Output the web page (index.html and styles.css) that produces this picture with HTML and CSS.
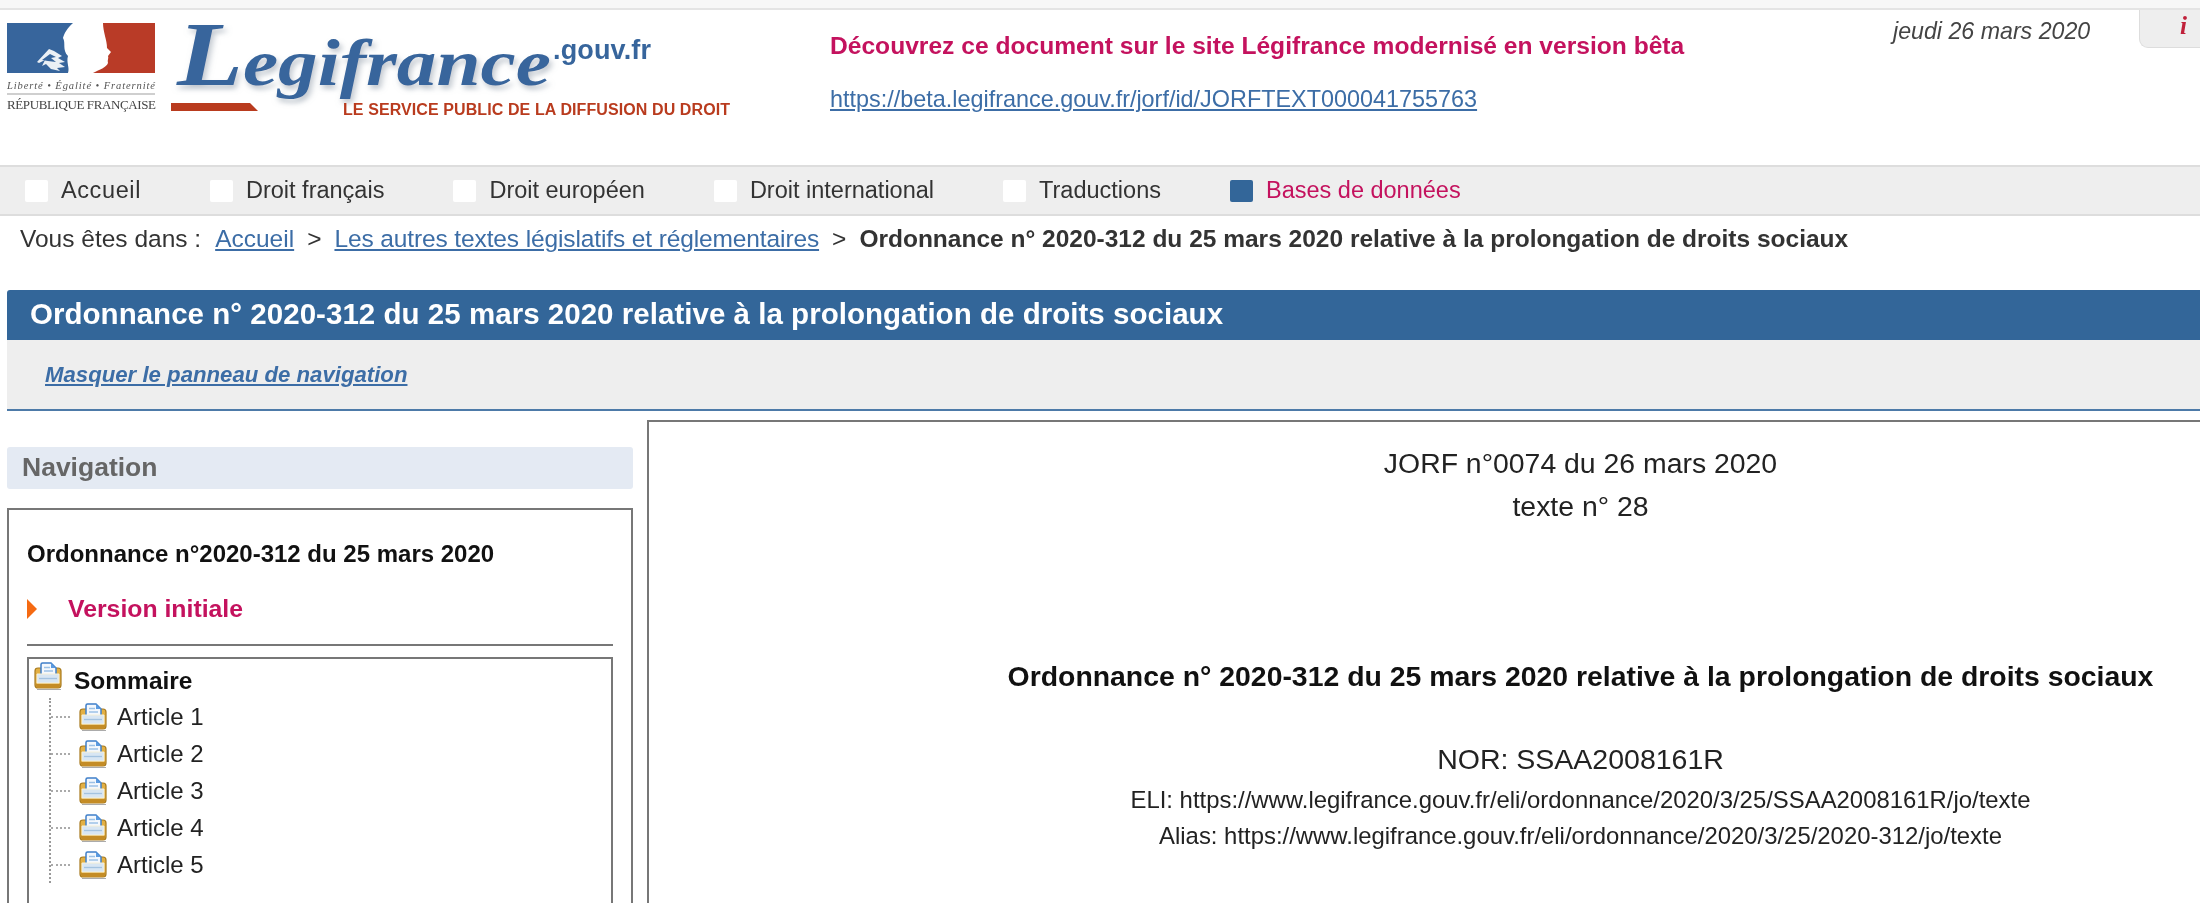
FILE: index.html
```html
<!DOCTYPE html>
<html lang="fr">
<head>
<meta charset="utf-8">
<title>Légifrance</title>
<link rel="stylesheet" href="styles.css">
</head>
<body>
<svg class="defs" width="0" height="0" aria-hidden="true">
  <defs>
    <filter id="ls" x="-5%" y="-5%" width="115%" height="125%"><feDropShadow dx="2" dy="4" stdDeviation="2.500" flood-color="#8d99a6" flood-opacity=".55"/></filter>
    <symbol id="folder" viewBox="1 0 28 28">
      <path d="M2 9q0-3 3-3h20q3 0 3 3v14q0 3-3 3H5q-3 0-3-3z" fill="#e3b044" stroke="#a87a1e" stroke-width="1.200"/>
      <path d="M8 13V2.500q0-1.500 1.500-1.500H18l5 5v7z" fill="#f4f8fd" stroke="#3f7fc9" stroke-width="1.500"/>
      <path d="M11 5.500h6M11 9h9" stroke="#9cc1e6" stroke-width="1.300"/>
      <path d="M18 1v5h5z" fill="#5c9be0"/>
      <path d="M4 12h22v9H4z" fill="#d8e6f3" stroke="#f6f0d8" stroke-width="1"/>
      <path d="M6 16.500h18" stroke="#a4c3e0" stroke-width="1.300"/>
      <path d="M3 22h24v1.500q0 2.500-2.500 2.500h-19Q3 26 3 23.500z" fill="#c48c26"/>
      <path d="M4 27.500h24" stroke="#888" stroke-width="1" opacity=".7"/>
    </symbol>
  </defs>
</svg>
<div class="page">
  <div class="topstrip"></div>
  <header class="header">
    <svg class="logo" width="740" height="110" viewBox="0 0 740 110" role="img" aria-label="Legifrance">
      <path d="M7 13H73C67 18 64 24 63 28C66 33 62 40 68 46C66 52 70 58 68 63H7z" fill="#37659c"/>
      <path d="M37 52l12-13 5 2 8 5-4 2 7 4-6 1 6 4-8 1 3 3-9-2-5-5-4 2 3-6-6 3z" fill="#fff" opacity=".9"/>
      <path d="M42 50l8-6 6 3-5 1 5 4-8-1z" fill="#37659c"/>
      <path d="M103 13H155V63H93C100 59 106 58 108 53C107 50 109 48 108 46L111 42 107 38C107 30 103 22 103 13z" fill="#b93b27"/>
      <rect x="7" y="83" width="148" height="2" fill="#cfcfcf"/>
      <text class="logo-motto" x="7" y="79" textLength="148">Liberté • Égalité • Fraternité</text>
      <text class="logo-rep" x="7" y="99" textLength="149">RÉPUBLIQUE FRANÇAISE</text>
      <text class="logo-name" transform="translate(177 75) scale(1.2 1)" filter="url(#ls)"><tspan class="logo-cap">L</tspan>egifrance</text>
      <text class="logo-gouv" x="553" y="49" textLength="98">.gouv.fr</text>
      <path d="M171 93H250L258 101H171z" fill="#b93b1e"/>
      <text class="logo-tag" x="343" y="105" textLength="387">LE SERVICE PUBLIC DE LA DIFFUSION DU DROIT</text>
    </svg>
    <div class="notice">
      <p class="notice-title">Découvrez ce document sur le site Légifrance modernisé en version bêta</p>
      <a class="notice-link" href="#">https://beta.legifrance.gouv.fr/jorf/id/JORFTEXT000041755763</a>
    </div>
    <div class="date">jeudi 26 mars 2020</div>
    <div class="infotab">i</div>
  </header>
  <nav class="mainnav">
    <a class="navitem"><span class="sq"></span>Accueil</a>
    <a class="navitem"><span class="sq"></span>Droit français</a>
    <a class="navitem"><span class="sq"></span>Droit européen</a>
    <a class="navitem"><span class="sq"></span>Droit international</a>
    <a class="navitem"><span class="sq"></span>Traductions</a>
    <a class="navitem active"><span class="sq"></span>Bases de données</a>
  </nav>
  <div class="crumbs">
    <span class="crumb-lead">Vous êtes dans :</span>
    <a href="#">Accueil</a>
    <span>&gt;</span>
    <a class="crumb-long" href="#">Les autres textes législatifs et réglementaires</a>
    <span>&gt;</span>
    <strong>Ordonnance n° 2020-312 du 25 mars 2020 relative à la prolongation de droits sociaux</strong>
  </div>
  <h1 class="titlebar">Ordonnance n° 2020-312 du 25 mars 2020 relative à la prolongation de droits sociaux</h1>
  <div class="subbar"><a href="#">Masquer le panneau de navigation</a></div>
  <main class="columns">
    <aside class="side">
      <h2 class="side-head">Navigation</h2>
      <div class="side-box">
        <div class="side-title">Ordonnance n°2020-312 du 25 mars 2020</div>
        <div class="version"><span class="arrow"></span>Version initiale</div>
        <hr class="rule">
        <div class="tree">
          <div class="tree-root">
            <svg class="ficon root-icon"><use href="#folder"/></svg>
            <span class="root-label">Sommaire</span>
          </div>
          <ul class="tree-list">
            <li><span class="conn"></span><svg class="ficon"><use href="#folder"/></svg>Article 1</li>
            <li><span class="conn"></span><svg class="ficon"><use href="#folder"/></svg>Article 2</li>
            <li><span class="conn"></span><svg class="ficon"><use href="#folder"/></svg>Article 3</li>
            <li><span class="conn"></span><svg class="ficon"><use href="#folder"/></svg>Article 4</li>
            <li><span class="conn"></span><svg class="ficon"><use href="#folder"/></svg>Article 5</li>
          </ul>
        </div>
      </div>
    </aside>
    <section class="doc">
      <div class="doc-inner">
        <p class="jorf">JORF n°0074 du 26 mars 2020</p>
        <p class="jorf">texte n° 28</p>
        <p class="doc-title">Ordonnance n° 2020-312 du 25 mars 2020 relative à la prolongation de droits sociaux</p>
        <p class="nor">NOR: SSAA2008161R</p>
        <p class="eli">ELI: https://www.legifrance.gouv.fr/eli/ordonnance/2020/3/25/SSAA2008161R/jo/texte</p>
        <p class="eli">Alias: https://www.legifrance.gouv.fr/eli/ordonnance/2020/3/25/2020-312/jo/texte</p>
      </div>
    </section>
  </main>
</div>
</body>
</html>
```
FILE: styles.css
```css
* { box-sizing: border-box; }
html, body { margin: 0; padding: 0; height: 903px; overflow: hidden; background: #fff; }
body { font-family: "Liberation Sans", Arial, sans-serif; color: #222; }
.defs { display: block; height: 0; }
.page { filter: blur(0.55px); height: 903px; overflow: hidden; }
p { margin: 0; }

.topstrip { height: 10px; background: #f7f7f7; border-bottom: 2px solid #e4e4e4; }

.header { display: flex; height: 155px; }
.logo { flex: none; display: block; overflow: visible; }
.logo-motto { font: italic 10.500px "Liberation Serif", serif; fill: #555; }
.logo-rep { font: 13px "Liberation Serif", serif; fill: #444; }
.logo-name { font: italic 700 66px "Liberation Serif", serif; fill: #37659c; }
.logo-cap { font-size: 90px; }
.logo-gouv { font: 700 27px "Liberation Sans", sans-serif; fill: #37659c; }
.logo-tag { font: 700 16px "Liberation Sans", sans-serif; fill: #b93b1e; }

.notice { margin-left: 90px; padding-top: 21px; width: 1010px; flex: none; }
.notice-title { font-size: 24.600px; font-weight: 700; color: #c4125e; line-height: 30px; white-space: nowrap; }
.notice-link { display: block; margin-top: 23px; font-size: 23.400px; line-height: 30px; color: #3c6da6; }

.date { flex: none; width: 299px; padding: 8px 0 0 53px; font-style: italic; font-size: 23.200px; line-height: 27px; color: #444; white-space: nowrap; }
.infotab { flex: none; width: 61px; height: 38px; background: #eee; border: 1px solid #ddd; border-top: 0; border-right: 0; border-bottom-left-radius: 9px; font: italic 700 25px/32px "Liberation Serif", serif; color: #c0203a; padding-left: 40px; }

.mainnav { height: 51px; background: #eee; border-top: 2px solid #ddd; border-bottom: 2px solid #ddd; display: flex; align-items: center; gap: 69px; padding-left: 25px; }
.navitem { display: flex; align-items: center; gap: 13px; font-size: 23.500px; color: #333; }
.navitem:first-child { letter-spacing: .6px; }
.sq { width: 23px; height: 22px; background: #fff; border-radius: 2px; }
.active { color: #c4125e; }
.active .sq { background: #336699; }

.crumbs { height: 74px; padding: 7px 0 0 20px; display: flex; gap: 13px; font-size: 24.500px; line-height: 32px; color: #333; white-space: nowrap; }
.crumb-lead { margin-right: 1px; }
.crumbs a { color: #3c6da6; }
.crumbs .crumb-long { letter-spacing: -.12px; }
.crumbs strong { color: #333; }

.titlebar { margin: 0 0 0 7px; height: 50px; background: #336699; color: #fff; font-size: 29.500px; letter-spacing: .03px; line-height: 48px; font-weight: 700; padding-left: 23px; border-radius: 3px 0 0 0; white-space: nowrap; }
.subbar { margin-left: 7px; height: 71px; background: #eee; border-bottom: 2px solid #4d7aa8; padding: 20px 0 0 38px; font-style: italic; font-weight: 700; font-size: 22.200px; line-height: 30px; }
.subbar a { color: #3c6da6; }

.columns { display: flex; gap: 14px; padding-left: 7px; }
.side { flex: none; width: 626px; padding-top: 36px; }
.side-head { margin: 0; height: 42px; background: #e4eaf3; border-radius: 3px; padding-left: 15px; font-size: 26.500px; line-height: 40px; font-weight: 700; color: #666; }
.side-box { margin-top: 19px; height: 500px; border: 2px solid #777; padding: 27px 18px 0; }
.side-title { font-size: 24px; line-height: 34px; font-weight: 700; color: #111; white-space: nowrap; }
.version { margin-top: 21px; display: flex; align-items: center; font-size: 24.800px; line-height: 34px; font-weight: 700; color: #c4125e; }
.arrow { width: 0; height: 0; border-left: 10px solid #f56a12; border-top: 10px solid transparent; border-bottom: 10px solid transparent; margin-right: 31px; }
.rule { margin: 18px 0 0; border: 0; height: 2px; background: #777; }
.tree { margin-top: 11px; height: 400px; border: 2px solid #777; padding: 0 4px; }
.tree-root { height: 39px; display: flex; align-items: flex-start; gap: 11px; }
.ficon { flex: none; width: 30px; height: 28px; display: block; }
.root-icon { margin-top: 3px; }
.root-label { margin-top: 8px; font-size: 24.500px; line-height: 28px; font-weight: 700; color: #111; }
.tree-list { list-style: none; margin: 0 0 0 16px; padding: 0; border-left: 2px dotted #999; }
.tree-list li { height: 37px; display: flex; align-items: center; gap: 9px; font-size: 24px; color: #222; }
.conn { width: 19px; border-top: 2px dotted #aaa; margin-right: -1px; }

.doc { flex: 1; margin-top: 9px; height: 500px; border: 2px solid #777; border-right: 0; padding-left: 312px; }
.doc-inner { text-align: center; color: #222; }
.jorf { font-size: 28.400px; line-height: 43px; }
.jorf:first-child { margin-top: 20px; }
.doc-title { margin-top: 131px; font-size: 28.400px; line-height: 34px; font-weight: 700; color: #111; white-space: nowrap; }
.nor { margin-top: 49px; font-size: 28.500px; line-height: 34px; }
.eli { font-size: 23.900px; line-height: 36px; margin-top: 6px; white-space: nowrap; }
.eli:last-child { margin-top: 0; }
```
